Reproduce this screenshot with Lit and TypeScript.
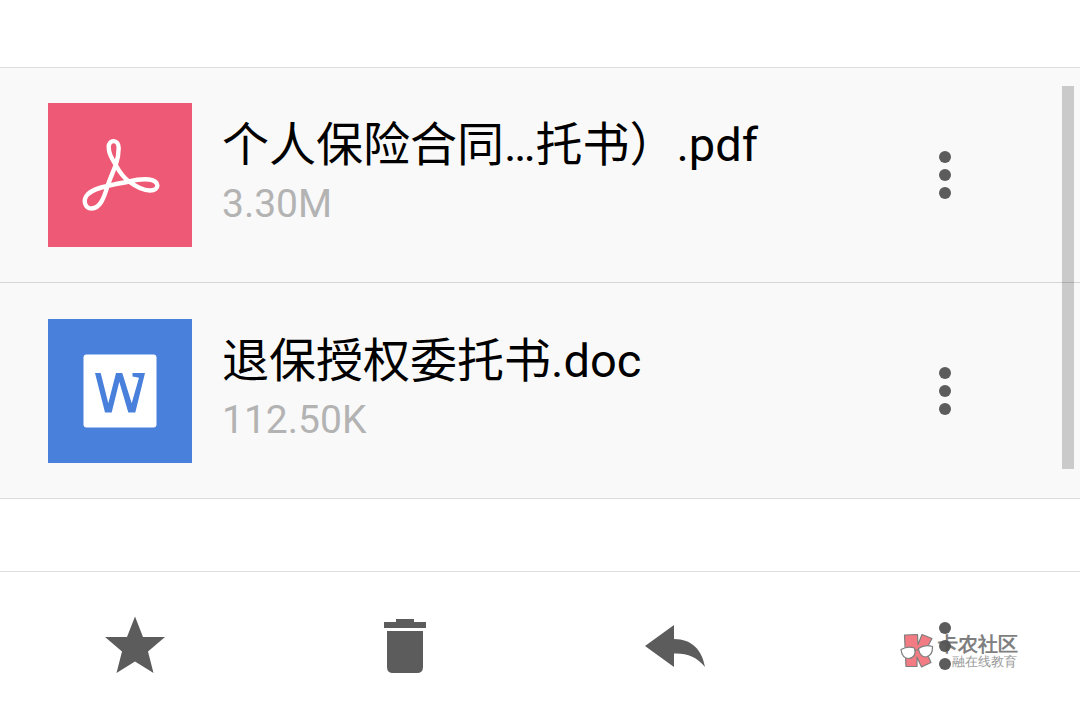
import { LitElement, html, css } from "lit";
import { customElement } from "lit/decorators.js";

interface Attachment {
  kind: "pdf" | "doc";
  name: string;
  size: string;
}

const attachments: Attachment[] = [
  { kind: "pdf", name: "个人保险合同…托书）.pdf", size: "3.30M" },
  { kind: "doc", name: "退保授权委托书.doc", size: "112.50K" },
];

@customElement("more-icon")
class MoreIcon extends LitElement {
  static styles = css`
    :host { display: block; width: 12px; height: 48px; }
    svg { display: block; }
  `;
  render() {
    return html`<svg width="12" height="48" viewBox="0 0 12 48" fill="#5c5c5c" aria-hidden="true">
      <circle cx="6" cy="6" r="6" /><circle cx="6" cy="24" r="6" /><circle cx="6" cy="42" r="6" />
    </svg>`;
  }
}

@customElement("file-icon")
class FileIcon extends LitElement {
  static properties = { kind: { type: String } };
  declare kind: "pdf" | "doc";
  static styles = css`
    :host { display: block; flex: none; }
    svg { display: block; }
    .pdf { background: #ee5a75; }
    .doc { background: #4880dc; }
  `;
  render() {
    return this.kind === "pdf"
      ? html`<svg class="pdf" width="144" height="144" viewBox="0 0 144 144" fill="none" stroke="#fff" stroke-width="4.4" stroke-linejoin="round" aria-hidden="true">
          <path d="M67.700 62C63 54 60.700 50 60.700 44C60.700 36 70.700 36 70.700 45C70.700 52 69.500 57 67.700 62C65 69 62 76 59.500 83C56 95 52 105.500 43.500 105.500C37 105.500 34 97 40 91C45 86.500 52 84.500 59.500 83C67 81 74 80 81 78.500C89 76.500 96 76 101 76.500C112 78 112 87.500 102 87.500C94 87.500 87 83 81 78.500C76 75 71 68 67.700 62Z" />
        </svg>`
      : html`<svg class="doc" width="144" height="144" viewBox="0 0 144 144" aria-hidden="true">
          <rect x="35.500" y="35.500" width="73" height="73" rx="3" fill="#fff" />
          <path d="M47 54h5.700l7.600 30.300L68 54h6.300l9.400 30.300L91 58.700 84.500 57.500V54H97L87.300 93.500h-7L71.300 62.700 63.700 93.500H57z" fill="#4880dc" />
        </svg>`;
  }
}

@customElement("app-root")
class AppRoot extends LitElement {
  static styles = css`
    :host {
      display: flex;
      flex-direction: column;
      min-height: 100vh;
      box-sizing: border-box;
      padding-top: 67px;
      background: #fff;
      color: #000;
      font-family: Roboto, "Noto Sans CJK SC", sans-serif;
    }
    button {
      display: grid;
      place-items: center;
      margin: 0;
      padding: 0;
      border: 0;
      background: none;
      cursor: pointer;
    }
    .list {
      position: relative;
      background: #f9f9f9;
      border-bottom: 1px solid #dedede;
    }
    .files { margin: 0; padding: 0; list-style: none; }
    .file {
      display: flex;
      align-items: center;
      gap: 30px;
      padding: 35px 87px 35px 48px;
      border-top: 1px solid #dedede;
    }
    .file + .file { padding-top: 36px; border-top-color: #d6d6d6; }
    .info { flex: 1; min-width: 0; padding-bottom: 6px; }
    .name, .size {
      margin: 0;
      font-weight: 400;
      white-space: nowrap;
      overflow: hidden;
      text-overflow: ellipsis;
    }
    .name { font-size: 47px; line-height: 64px; }
    .size { font-size: 39px; line-height: 54px; color: #b3b3b3; }
    .more { width: 96px; height: 96px; }
    .thumb {
      position: absolute;
      top: 19px;
      right: 6px;
      bottom: 29px;
      width: 12px;
      background: rgba(0, 0, 0, 0.19);
    }
    .bar {
      display: grid;
      grid-template-columns: repeat(4, 1fr);
      flex: 1;
      margin-top: 72px;
      border-top: 1px solid #dedede;
    }
    .action { position: relative; min-height: 146px; padding-bottom: 2px; }
    .action svg { display: block; }
    .mark {
      position: absolute;
      top: 60px;
      left: 90px;
      display: flex;
      gap: 4px;
      opacity: 0.75;
      pointer-events: none;
      text-align: left;
      white-space: nowrap;
      color: #555;
    }
    .brand { display: block; font-size: 20px; line-height: 25px; font-weight: 900; }
    .tag { display: block; padding-left: 14px; font-size: 13px; line-height: 10px; color: #777; }
  `;

  render() {
    return html`
      <section class="list">
        <ul class="files">
          ${attachments.map(
            (f) => html`<li class="file">
              <file-icon .kind=${f.kind}></file-icon>
              <div class="info">
                <h2 class="name">${f.name}</h2>
                <p class="size">${f.size}</p>
              </div>
              <button class="more" aria-label="更多"><more-icon></more-icon></button>
            </li>`
          )}
        </ul>
        <div class="thumb"></div>
      </section>
      <nav class="bar">
        <button class="action" aria-label="收藏">
          <svg width="60" height="60" viewBox="0 0 60 60" fill="#5c5c5c"><path d="M30 .5l8 20.500h22L43 35.500l5.500 21.500L30 45.500 11.500 57 17 35.500 0 21h22z" /></svg>
        </button>
        <button class="action" aria-label="删除">
          <svg width="42" height="54" viewBox="0 0 42 54" fill="#5c5c5c"><path d="M12 0h18v3h12v6H0V3h12zM3 12h36v36q0 6-6 6H9q-6 0-6-6z" /></svg>
        </button>
        <button class="action" aria-label="回复">
          <svg width="60" height="42" viewBox="0 0 60 42" fill="#5c5c5c"><path d="M0 21L29 0v14c18 0 28 11 31 28-8-10-18-14-31-13.500V42z" /></svg>
        </button>
        <button class="action" aria-label="更多操作">
          <more-icon></more-icon>
          <span class="mark">
            <svg width="34" height="36" viewBox="0 0 34 36" stroke="#555" stroke-width="1.200" stroke-linejoin="round">
              <path d="M4.500 3l13-.5.500 10 4-10 10 4-6.500 12 5.500 12-9.500 4.500-4.500-10v9.500H6z" fill="#f0505a" />
              <path d="M1 17.500Q8 13.500 14.500 16q2.500 9-5.500 10.500Q2 26.500 1 17.500zM18.500 16.500Q25 12 32.500 14.500q.5 9-6.500 10.500-6.500 0-7.500-8.500zM15 18.500l4-1" fill="#fff" />
            </svg>
            <span><span class="brand">卡农社区</span><span class="tag">融在线教育</span></span>
          </span>
        </button>
      </nav>
    `;
  }
}
